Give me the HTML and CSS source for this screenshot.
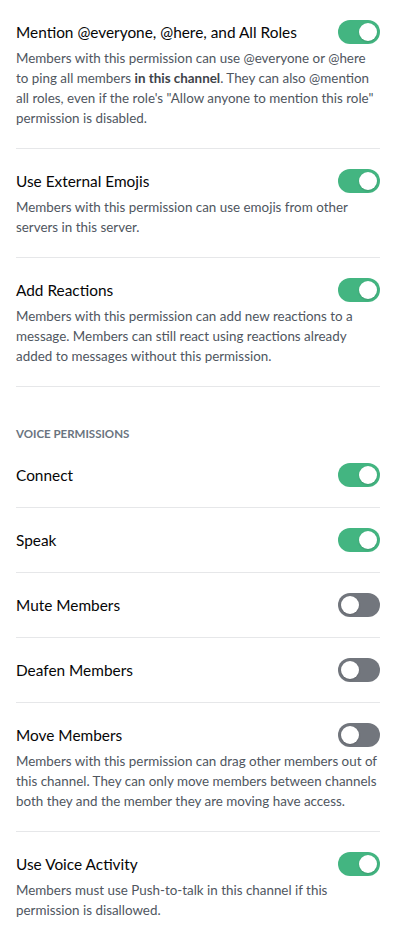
FILE: index.html
```html
<!DOCTYPE html>
<html>
<head>
<meta charset="utf-8">
<link rel="stylesheet" href="styles.css">
</head>
<body>
<div class="list">
  <div class="item">
    <div class="head"><span class="title">Mention @everyone, @here, and All Roles</span><span class="toggle on"><span class="knob"></span></span></div>
    <div class="desc">Members with this permission can use @everyone or @here to ping all members <strong>in this channel</strong>. They can also @mention all roles, even if the role's "Allow anyone to mention this role" permission is disabled.</div>
  </div>
  <div class="item">
    <div class="head"><span class="title">Use External Emojis</span><span class="toggle on"><span class="knob"></span></span></div>
    <div class="desc">Members with this permission can use emojis from other servers in this server.</div>
  </div>
  <div class="item">
    <div class="head"><span class="title">Add Reactions</span><span class="toggle on"><span class="knob"></span></span></div>
    <div class="desc">Members with this permission can add new reactions to a message. Members can still react using reactions already added to messages without this permission.</div>
  </div>
  <div class="section">Voice Permissions</div>
  <div class="item">
    <div class="head"><span class="title">Connect</span><span class="toggle on"><span class="knob"></span></span></div>
  </div>
  <div class="item">
    <div class="head"><span class="title">Speak</span><span class="toggle on"><span class="knob"></span></span></div>
  </div>
  <div class="item">
    <div class="head"><span class="title">Mute Members</span><span class="toggle"><span class="knob"></span></span></div>
  </div>
  <div class="item">
    <div class="head"><span class="title">Deafen Members</span><span class="toggle"><span class="knob"></span></span></div>
  </div>
  <div class="item">
    <div class="head"><span class="title">Move Members</span><span class="toggle"><span class="knob"></span></span></div>
    <div class="desc">Members with this permission can drag other members out of this channel. They can only move members between channels both they and the member they are moving have access.</div>
  </div>
  <div class="item last">
    <div class="head"><span class="title">Use Voice Activity</span><span class="toggle on"><span class="knob"></span></span></div>
    <div class="desc">Members must use Push-to-talk in this channel if this permission is disallowed.</div>
  </div>
</div>
</body>
</html>
```
FILE: styles.css
```css
* { box-sizing: border-box; }
html, body {
  margin: 0;
  padding: 0;
  background: #ffffff;
}
body {
  font-family: Lato, "Open Sans", sans-serif;
}
.list {
  padding: 0 22px 0 16px;
  display: flex;
  flex-direction: column;
}
.item {
  padding: 20px 0;
  border-bottom: 1px solid #e6e7e9;
}
.item.last { border-bottom: none; }
.head {
  display: flex;
  align-items: center;
  justify-content: space-between;
  height: 24px;
}
.title {
  font-size: 15.4px;
  line-height: 20px;
  color: #060607;
  font-weight: 400;
}
.desc {
  margin-top: 4px;
  font-size: 13.4px;
  line-height: 20px;
  color: #4f5660;
}
.desc strong {
  font-weight: 700;
  color: #3e434a;
}
.section {
  margin-top: 39px;
  margin-bottom: 1px;
  font-size: 11.5px;
  line-height: 16px;
  font-weight: 700;
  text-transform: uppercase;
  color: #6a7480;
}
.toggle {
  flex: none;
  width: 42px;
  height: 24px;
  border-radius: 12px;
  background: #72767d;
  display: flex;
  align-items: center;
  padding: 0 3px;
  justify-content: flex-start;
}
.toggle.on {
  background: #43b581;
  justify-content: flex-end;
}
.knob {
  width: 18px;
  height: 18px;
  border-radius: 50%;
  background: #ffffff;
  box-shadow: 0 1px 2px rgba(0,0,0,0.15);
}
```
